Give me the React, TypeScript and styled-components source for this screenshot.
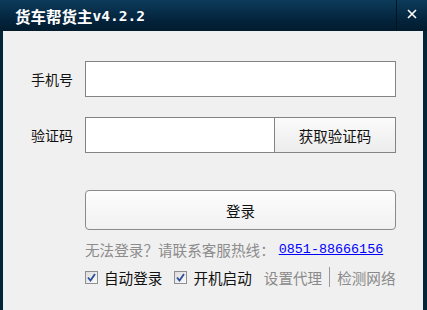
import React, { useState } from 'react';
import styled, { createGlobalStyle } from 'styled-components';

const Global = createGlobalStyle`
  html, body { margin: 0; padding: 0; background: #032538; }
  * { box-sizing: border-box; }
`;

const CJK = `"Noto Sans CJK SC", "Liberation Sans", sans-serif`;

const Window = styled.div`
  width: 427px;
  height: 310px;
  display: flex;
  flex-direction: column;
  background: #032538;
  overflow: hidden;
  font-family: ${CJK};
`;

const TitleBar = styled.div`
  height: 31px;
  flex: none;
  display: flex;
  align-items: stretch;
  background: linear-gradient(#0c3b5a, #03223a 70%, #021c2e);
`;

const Title = styled.div`
  flex: 1;
  display: flex;
  align-items: center;
  padding-left: 15px;
  color: #fff;
  font-size: 15.5px;
  font-weight: bold;
`;

const Version = styled.span`
  font-family: "DejaVu Sans Mono", monospace;
  font-size: 14.5px;
`;

const CloseButton = styled.div`
  width: 31px;
  display: flex;
  align-items: center;
  justify-content: center;
  border-left: 1px solid #011420;
  padding-bottom: 4px;
`;

const Body = styled.div`
  flex: 1;
  margin: 0 4px 0 3px;
  background: #f0f0f0;
  padding-top: 30px;
  display: flex;
  flex-direction: column;
`;

const Row = styled.div<{ $gap?: number }>`
  display: flex;
  align-items: center;
  height: 36px;
  margin-bottom: ${(p) => p.$gap ?? 0}px;
`;

const Label = styled.div`
  width: 82px;
  padding-right: 12px;
  text-align: right;
  font-size: 14px;
  color: #111;
`;

const Input = styled.div<{ $width: number }>`
  width: ${(p) => p.$width}px;
  height: 36px;
  background: #fff;
  border: 1px solid #848484;
`;

const CodeButton = styled.div`
  width: 121px;
  height: 36px;
  border: 1px solid #848484;
  border-left: none;
  background: linear-gradient(#fbfbfb, #ececec);
  display: flex;
  align-items: center;
  justify-content: center;
  font-size: 14.5px;
  color: #111;
`;

const Indented = styled.div`
  margin-left: 82px;
  width: 311px;
`;

const LoginButton = styled.div`
  height: 40px;
  border: 1px solid #8a8a8a;
  border-radius: 4px;
  background: linear-gradient(#fdfdfd, #f1f1f1);
  display: flex;
  align-items: center;
  justify-content: center;
  font-size: 14.5px;
  color: #111;
`;

const Hotline = styled.div`
  margin-top: 8px;
  height: 22px;
  display: flex;
  align-items: center;
  font-size: 14.6px;
  color: #8c8c8c;
  white-space: nowrap;
`;

const Phone = styled.a`
  margin-left: 4px;
  font-family: "Liberation Mono", monospace;
  font-size: 13.4px;
  color: #0000ff;
  text-decoration: underline;
`;

const Options = styled.div`
  margin-top: 5px;
  height: 24px;
  display: flex;
  align-items: center;
  white-space: nowrap;
`;

const Check = styled.label`
  display: flex;
  align-items: center;
  gap: 6px;
  margin-right: 12px;
  font-size: 14.6px;
  color: #111;
`;

const Box = styled.span`
  width: 13px;
  height: 13px;
  border: 1px solid #8e8f8f;
  background: linear-gradient(135deg, #dcdcdc, #fbfbfb);
  display: flex;
  align-items: center;
  justify-content: center;
`;

const LinkText = styled.span`
  font-size: 14.6px;
  color: #8a8a8a;
`;

const Divider = styled.span`
  width: 1px;
  height: 20px;
  background: #9a9a9a;
  margin: 0 7px;
`;

const CheckItem = ({ text }: { text: string }) => {
  const [on, setOn] = useState(true);
  return (
    <Check onClick={() => setOn(!on)}>
      <Box>
        {on && (
          <svg width="9" height="9" viewBox="0 0 9 9">
            <path d="M1 4.5 L3.5 7.5 L8 1" fill="none" stroke="#2b4c9b" strokeWidth="1.8" />
          </svg>
        )}
      </Box>
      {text}
    </Check>
  );
};

export default function App() {
  return (
    <Window>
      <Global />
      <TitleBar>
        <Title>
          货车帮货主<Version>v4.2.2</Version>
        </Title>
        <CloseButton>
          <svg width="10" height="10" viewBox="0 0 10 10">
            <path d="M1 1 L9 9 M9 1 L1 9" stroke="#fff" strokeWidth="1.6" />
          </svg>
        </CloseButton>
      </TitleBar>
      <Body>
        <Row $gap={20}>
          <Label>手机号</Label>
          <Input $width={311} />
        </Row>
        <Row $gap={37}>
          <Label>验证码</Label>
          <Input $width={190} />
          <CodeButton>获取验证码</CodeButton>
        </Row>
        <Indented>
          <LoginButton>登录</LoginButton>
          <Hotline>
            无法登录？请联系客服热线：<Phone>0851-88666156</Phone>
          </Hotline>
          <Options>
            <CheckItem text="自动登录" />
            <CheckItem text="开机启动" />
            <LinkText>设置代理</LinkText>
            <Divider />
            <LinkText>检测网络</LinkText>
          </Options>
        </Indented>
      </Body>
    </Window>
  );
}
